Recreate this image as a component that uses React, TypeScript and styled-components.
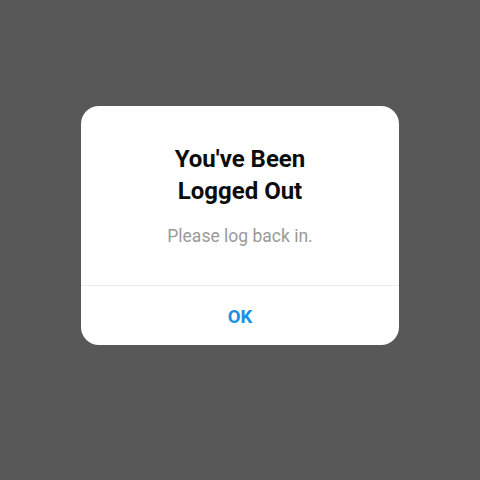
import React from 'react';
import styled, { createGlobalStyle } from 'styled-components';

const GlobalStyle = createGlobalStyle`
  html, body {
    margin: 0;
    padding: 0;
    background: #585858;
    font-family: Roboto, "Liberation Sans", sans-serif;
  }
`;

const Screen = styled.div`
  width: 480px;
  height: 480px;
  display: flex;
  align-items: flex-start;
  justify-content: center;
  padding-top: 106px;
  box-sizing: border-box;
`;

const Dialog = styled.div`
  width: 318px;
  background: #ffffff;
  border-radius: 18px;
  overflow: hidden;
  display: flex;
  flex-direction: column;
`;

const Body = styled.div`
  height: 180px;
  box-sizing: border-box;
  padding: 37px 24px 0;
  display: flex;
  flex-direction: column;
  align-items: center;
  border-bottom: 1px solid #ececec;
`;

const Title = styled.h1`
  margin: 0;
  font-size: 24px;
  line-height: 32px;
  font-weight: 700;
  color: #0c0c0c;
  text-align: center;
`;

const Message = styled.p`
  margin: 19px 0 0;
  font-size: 17.5px;
  line-height: 20px;
  color: #9a9a9a;
  text-align: center;
`;

const Action = styled.button`
  height: 59px;
  padding: 3px 0 0;
  border: none;
  background: transparent;
  font-family: inherit;
  font-size: 18.5px;
  font-weight: 700;
  color: #1b8fe3;
  cursor: pointer;
`;

export default function App() {
  return (
    <>
      <GlobalStyle />
      <Screen>
        <Dialog>
          <Body>
            <Title>
              You've Been
              <br />
              Logged Out
            </Title>
            <Message>Please log back in.</Message>
          </Body>
          <Action>OK</Action>
        </Dialog>
      </Screen>
    </>
  );
}
